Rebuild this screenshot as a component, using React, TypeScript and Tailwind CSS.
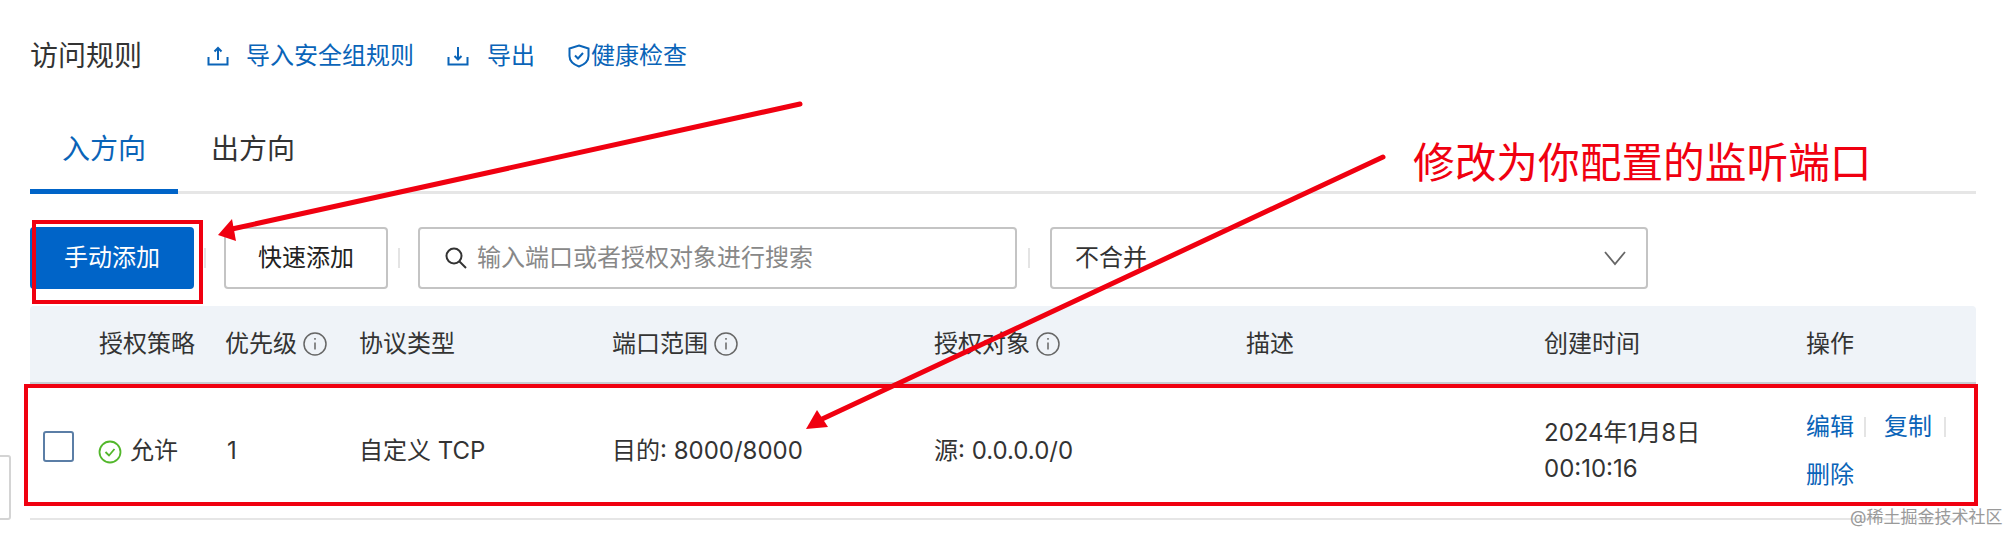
const FONT = 'font-["Inter","Noto_Sans_CJK_SC",sans-serif]';

function Info() {
  return (
    <svg className="ml-[6px] shrink-0" width="24" height="24" viewBox="0 0 24 24" fill="none" stroke="#666" strokeWidth="1.500">
      <circle cx="12" cy="12" r="11" />
      <path d="M12 10.500v7" />
      <path d="M12 6v1.800" />
    </svg>
  );
}

function Sep() {
  return <div className="h-[20px] w-[2px] bg-[#e4e4e4]" />;
}

const HEADERS: { label: string; info?: boolean }[] = [
  { label: '' },
  { label: '授权策略' },
  { label: '优先级', info: true },
  { label: '协议类型' },
  { label: '端口范围', info: true },
  { label: '授权对象', info: true },
  { label: '描述' },
  { label: '创建时间' },
  { label: '操作' },
];

const COLS = 'grid grid-cols-[69px_126px_134px_253px_322px_312px_298px_262px_170px]';

export default function App() {
  return (
    <div className={`relative h-[534px] w-[2016px] overflow-hidden bg-white text-[24px] text-[#333] ${FONT}`}>
      <div className="pl-[30px] pr-[40px] pt-[36px]">
        {/* title row */}
        <div className="flex h-[40px] items-center text-[#0a64b8]">
          <span className="w-[177px] text-[28px] text-[#333]">访问规则</span>
          <svg width="22" height="20" viewBox="0 0 22 20" fill="none" stroke="#0a64b8" strokeWidth="2">
            <path d="M1.500 11v7.500h19V11" />
            <path d="M11 14V2M7.500 5.500 11 2l3.500 3.500" />
          </svg>
          <span className="ml-[17px]">导入安全组规则</span>
          <svg className="ml-[33px]" width="22" height="20" viewBox="0 0 22 20" fill="none" stroke="#0a64b8" strokeWidth="2">
            <path d="M1.500 11v7.500h19V11" />
            <path d="M11 1v12M7.500 10 11 13.500 14.500 10" />
          </svg>
          <span className="ml-[18px]">导出</span>
          <svg className="ml-[33px]" width="22" height="24" viewBox="0 0 22 24" fill="none" stroke="#0a64b8" strokeWidth="2">
            <path d="M11 1.500 20.500 4.500V12c0 5-4 8.500-9.500 10.500C5.500 20.500 1.500 17 1.500 12V4.500Z" />
            <path d="m7 11.500 3 3 5-5.500" />
          </svg>
          <span className="ml-[1px]">健康检查</span>
        </div>

        {/* tabs */}
        <div className="mt-[28px] flex h-[90px] border-b-[3px] border-[#e6e6e6] text-[28px]">
          <div className="-mb-[3px] flex w-[148px] items-center justify-center border-b-[5px] border-[#0064c8] pt-[5px] text-[#0a64b8]">入方向</div>
          <div className="-mb-[3px] flex items-center px-[33px] pb-[5px] pt-[5px]">出方向</div>
        </div>

        {/* toolbar */}
        <div className="mt-[33px] flex h-[62px] items-center">
          <button className="h-full w-[164px] rounded-[4px] bg-[#0064c8] text-[24px] text-white">手动添加</button>
          <div className="ml-[6px] mr-[14px] flex w-[10px] justify-center"><Sep /></div>
          <button className="h-full w-[164px] rounded-[4px] border-2 border-[#c4c4c4] bg-white text-[24px] text-[#222]">快速添加</button>
          <div className="ml-[6px] mr-[14px] flex w-[10px] justify-center"><Sep /></div>
          <div className="flex h-full w-[599px] items-center rounded-[4px] border-2 border-[#c4c4c4] pl-[25px] text-[#888]">
            <svg width="22" height="22" viewBox="0 0 22 22" fill="none" stroke="#333" strokeWidth="2">
              <circle cx="9" cy="9" r="7.500" />
              <path d="m14.500 14.500 6.500 6.500" />
            </svg>
            <span className="ml-[10px]">输入端口或者授权对象进行搜索</span>
          </div>
          <div className="ml-[7px] mr-[16px] flex w-[10px] justify-center"><Sep /></div>
          <div className="flex h-full w-[598px] items-center justify-between rounded-[4px] border-2 border-[#c4c4c4] pl-[23px] pr-[19px]">
            <span>不合并</span>
            <svg width="24" height="16" viewBox="0 0 24 16" fill="none" stroke="#666" strokeWidth="1.800">
              <path d="m2 2 10 12L22 2" />
            </svg>
          </div>
        </div>

        {/* table */}
        <div className={`mt-[17px] h-[78px] items-center rounded-t-[4px] border-b-[2px] border-[#c8ccd2] bg-[#eff3f8] ${COLS}`}>
          {HEADERS.map((h, i) => (
            <div key={i} className="flex items-center">
              {h.label}
              {h.info && <Info />}
            </div>
          ))}
        </div>
        <div className={`h-[136px] items-center border-b-[2px] border-[#e6e6e6] ${COLS}`}>
          <div className="pl-[13px]">
            <div className="mb-[10px] h-[31px] w-[31px] rounded-[3px] border-2 border-[#5b7ea6]" />
          </div>
          <div className="-ml-[1px] flex items-center">
            <svg className="mt-[2px]" width="24" height="24" viewBox="0 0 24 24" fill="none" stroke="#52b72b" strokeWidth="1.800">
              <circle cx="12" cy="12" r="10.500" />
              <path d="m7.500 12 3.500 3.500 5.500-6.500" />
            </svg>
            <span className="ml-[8px]">允许</span>
          </div>
          <div className="pl-[2px]">1</div>
          <div>自定义 TCP</div>
          <div>目的: 8000/8000</div>
          <div>源: 0.0.0.0/0</div>
          <div />
          <div className="leading-[36px]">
            <div>2024年1月8日</div>
            <div>00:10:16</div>
          </div>
          <div className="text-[#0a64b8]">
            <div className="flex items-center">
              <span>编辑</span>
              <div className="ml-[10px] mr-[18px]"><Sep /></div>
              <span>复制</span>
              <div className="ml-[12px]"><Sep /></div>
            </div>
            <div className="mt-[12px]">删除</div>
          </div>
        </div>
      </div>

      {/* cut-off panel at the left edge */}
      <div className="absolute left-[-10px] top-[455px] h-[65px] w-[21px] rounded-[3px] border-2 border-[#d4d4d4]" />

      {/* annotations */}
      <div className="absolute left-[32px] top-[220px] h-[84px] w-[171px] border-[4px] border-[#f00010]" />
      <div className="absolute left-[24px] top-[384px] h-[122px] w-[1954px] border-[4px] border-[#f00010]" />
      <svg className="absolute left-0 top-0" width="2016" height="534" fill="#f00010" stroke="none">
        <path d="M800 104 232 229" stroke="#f00010" strokeWidth="5" strokeLinecap="round" />
        <path d="m218 235 14-16 4 22z" />
        <path d="M1383 157 820 420" stroke="#f00010" strokeWidth="5" strokeLinecap="round" />
        <path d="m806 429 11-19 11 17z" />
      </svg>
      <div className="absolute left-[1413px] top-[136px] text-[41.700px] leading-[54px] whitespace-nowrap text-[#f00010]">修改为你配置的监听端口</div>
      <div className="absolute left-[1850px] top-[505px] text-[17px] leading-[24px] whitespace-nowrap text-[#9a9a9a]">@稀土掘金技术社区</div>
    </div>
  );
}
